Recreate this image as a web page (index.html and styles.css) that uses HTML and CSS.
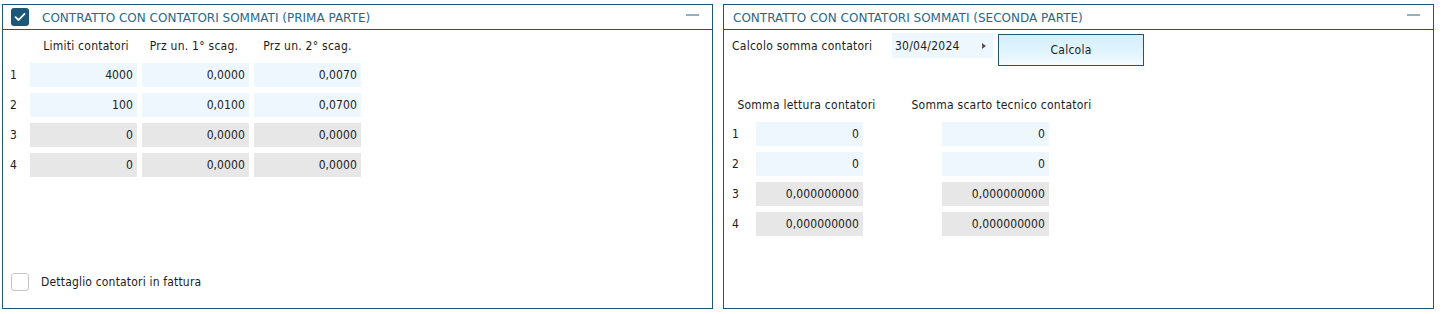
FILE: index.html
```html
<!DOCTYPE html>
<html lang="it">
<head>
<meta charset="utf-8">
<title>Contratto con contatori sommati</title>
<link rel="stylesheet" href="styles.css">
</head>
<body>
<div class="page">
  <section class="panel">
    <header class="panel-head">
      <span class="chk chk-on">
        <svg width="12" height="10" viewBox="0 0 12 10"><path d="M1.5 5.2 L4.6 8 L10.5 1.8" fill="none" stroke="#fff" stroke-width="1.8" stroke-linecap="round" stroke-linejoin="round"/></svg>
      </span>
      <span class="title">CONTRATTO CON CONTATORI SOMMATI (PRIMA PARTE)</span>
      <span class="minus"></span>
    </header>
    <div class="panel-body left-body">
      <div class="grid3">
        <span></span>
        <span class="colhead h-lim">Limiti contatori</span>
        <span class="colhead h-p1">Prz un. 1° scag.</span>
        <span class="colhead">Prz un. 2° scag.</span>

        <span class="rn">1</span>
        <span class="fld blue">4000</span>
        <span class="fld blue">0,0000</span>
        <span class="fld blue">0,0070</span>

        <span class="rn">2</span>
        <span class="fld blue">100</span>
        <span class="fld blue">0,0100</span>
        <span class="fld blue">0,0700</span>

        <span class="rn">3</span>
        <span class="fld gray">0</span>
        <span class="fld gray">0,0000</span>
        <span class="fld gray">0,0000</span>

        <span class="rn">4</span>
        <span class="fld gray">0</span>
        <span class="fld gray">0,0000</span>
        <span class="fld gray">0,0000</span>
      </div>
      <label class="detail">
        <span class="chk chk-off"></span>
        <span>Dettaglio contatori in fattura</span>
      </label>
    </div>
  </section>

  <section class="panel">
    <header class="panel-head">
      <span class="title title-r">CONTRATTO CON CONTATORI SOMMATI (SECONDA PARTE)</span>
      <span class="minus"></span>
    </header>
    <div class="panel-body right-body">
      <div class="calc-row">
        <span class="calc-label">Calcolo somma contatori</span>
        <span class="date">30/04/2024<span class="tri"></span></span>
        <button class="btn" type="button">Calcola</button>
      </div>
      <div class="grid2">
        <span></span>
        <span class="colhead h-sl">Somma lettura contatori</span>
        <span class="colhead c2 h-ss">Somma scarto tecnico contatori</span>

        <span class="rn">1</span>
        <span class="fld blue">0</span>
        <span class="fld blue c2">0</span>

        <span class="rn">2</span>
        <span class="fld blue">0</span>
        <span class="fld blue c2">0</span>

        <span class="rn">3</span>
        <span class="fld gray">0,000000000</span>
        <span class="fld gray c2">0,000000000</span>

        <span class="rn">4</span>
        <span class="fld gray">0,000000000</span>
        <span class="fld gray c2">0,000000000</span>
      </div>
    </div>
  </section>
</div>
</body>
</html>
```
FILE: styles.css
```css
* { box-sizing: border-box; }
html, body { margin: 0; padding: 0; background: #fff; }
body {
  font-family: "DejaVu Sans Condensed", "DejaVu Sans", sans-serif;
  font-size: 12px;
  letter-spacing: 0.25px;
  color: #1b1b1b;
}
.page {
  display: flex;
  gap: 10px;
  padding: 4px 0 0 2px;
}
.panel {
  width: 711px;
  height: 305px;
  border: 1px solid #1e5676;
  display: flex;
  flex-direction: column;
}
.panel-head {
  height: 25px;
  border-bottom: 1px solid #1e5676;
  display: flex;
  align-items: center;
  padding: 1px 13px 0 8px;
  flex-shrink: 0;
}
.title {
  font-family: "DejaVu Sans", sans-serif;
  color: #2a6789;
  font-size: 12px;
  letter-spacing: 0;
  flex: 1;
}
.title-r { padding-left: 1px; }
.minus {
  width: 13px;
  height: 2px;
  background: #8db2c4;
  margin-top: -5px;
}
.chk {
  width: 18px;
  height: 18px;
  border-radius: 3px;
  display: inline-flex;
  align-items: center;
  justify-content: center;
  flex-shrink: 0;
}
.chk-on {
  background: #1d5777;
  margin-right: 13px;
  margin-top: -1px;
}
.chk-off {
  border: 1px solid #c6c6c6;
  background: #fff;
  margin-right: 12px;
}
.panel-body {
  flex: 1;
  display: flex;
  flex-direction: column;
}
.left-body {
  padding: 3px 0 0 7px;
}
.grid3 {
  display: grid;
  grid-template-columns: 15px 107px 107px 107px;
  grid-template-rows: 24px repeat(4, 24px);
  column-gap: 5px;
  row-gap: 6px;
}
.colhead {
  display: flex;
  justify-content: center;
  align-items: center;
  white-space: nowrap;
  padding-top: 1px;
}
.h-lim { padding-left: 5px; }
.h-p1 { padding-right: 3px; }
.h-sl { padding-right: 6px; }
.h-ss { padding-left: 12px; }
.rn {
  display: flex;
  align-items: center;
}
.fld {
  display: flex;
  align-items: center;
  justify-content: flex-end;
  padding-right: 4px;
  letter-spacing: 0.1px;
}
.blue { background: #eef7fd; }
.gray { background: #e7e7e7; }
.detail {
  margin-top: auto;
  margin-bottom: 17px;
  margin-left: 1px;
  display: flex;
  align-items: center;
  letter-spacing: 0.18px;
}
.right-body {
  padding: 3px 0 0 8px;
}
.calc-row {
  display: flex;
  align-items: flex-start;
  height: 32px;
}
.calc-label {
  height: 25px;
  display: flex;
  align-items: center;
  width: 160px;
}
.date {
  width: 101px;
  height: 25px;
  background: #eef7fd;
  display: flex;
  align-items: center;
  padding-left: 3px;
  position: relative;
}
.tri {
  position: absolute;
  right: 7px;
  top: 10px;
  width: 0;
  height: 0;
  border-top: 3px solid transparent;
  border-bottom: 3px solid transparent;
  border-left: 4px solid #555;
}
.btn {
  margin-left: 5px;
  margin-top: 1px;
  width: 146px;
  height: 32px;
  border: 1px solid #1e5676;
  background: linear-gradient(#d3eefc, #e6f6fe 70%, #f4fbff);
  font-family: inherit;
  font-size: 12px;
  letter-spacing: 0.25px;
  color: #1b1b1b;
  padding: 0;
}
.grid2 {
  margin-top: 27px;
  display: grid;
  grid-template-columns: 24px 107px 186px;
  grid-template-rows: 24px repeat(4, 24px);
  row-gap: 6px;
}
.c2 { margin-left: 79px; }
```
